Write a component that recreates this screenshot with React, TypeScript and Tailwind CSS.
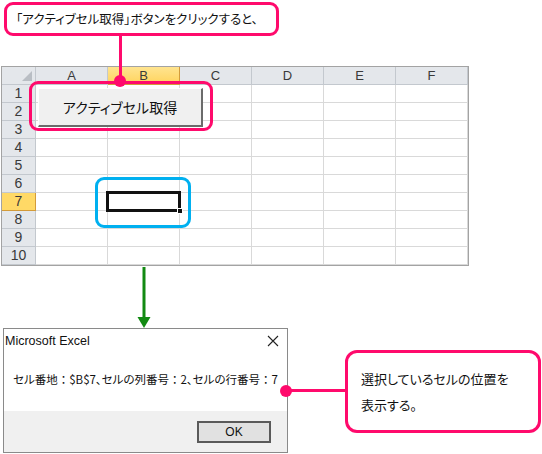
import React from 'react'

const cols = ['A', 'B', 'C', 'D', 'E', 'F']
const rows = [1, 2, 3, 4, 5, 6, 7, 8, 9, 10]

const jp = "font-['Noto_Sans_CJK_JP','Noto_Sans',sans-serif] [font-feature-settings:'palt']"

const Colon = () => <span className="[font-feature-settings:normal]">：</span>

const Sheet = () => (
  <div className="ml-[1px] w-[468px] border border-[#a3a3a3] font-['Liberation_Sans',sans-serif]">
    <div className="flex h-[18px]">
      <div className="relative w-[34px] border-r border-b border-[#c3c8ce] bg-[#e4e7eb]">
        <svg className="absolute right-[3px] bottom-[3px]" width="10" height="10" viewBox="0 0 10 10">
          <polygon points="10,0 10,10 0,10" fill="#b9bec4" />
        </svg>
      </div>
      {cols.map((c) => (
        <div
          key={c}
          className={
            c === 'B'
              ? 'flex w-[72px] items-center justify-center border-r border-b border-[#d39b3a] bg-gradient-to-b from-[#ffe48f] to-[#ffd35a] text-[13px] text-[#3a3a3a]'
              : 'flex w-[72px] items-center justify-center border-r border-b border-[#c3c8ce] bg-[#e4e7eb] text-[13px] text-[#3a3a3a]'
          }
        >
          {c}
        </div>
      ))}
    </div>
    {rows.map((r) => (
      <div key={r} className="flex h-[18px]">
        <div
          className={
            r === 7
              ? 'flex w-[34px] items-center justify-center border-r border-b border-[#d39b3a] bg-[#ffd966] text-[14px] text-[#3a3a3a]'
              : 'flex w-[34px] items-center justify-center border-r border-b border-[#c3c8ce] bg-[#e4e7eb] text-[14px] text-[#3a3a3a]'
          }
        >
          {r}
        </div>
        {cols.map((c) => (
          <div key={c} className="relative w-[72px] border-r border-b border-[#d9d9d9] bg-white">
            {r === 7 && c === 'B' && (
              <div className="absolute -top-[2px] -left-[2px] z-10 h-[21px] w-[75px] border-[3px] border-[#111]">
                <div className="absolute -right-[5px] -bottom-[5px] h-[6px] w-[6px] border border-white bg-[#111]" />
              </div>
            )}
          </div>
        ))}
      </div>
    ))}
  </div>
)

const Dialog = () => (
  <div className="mt-[62px] ml-[3px] flex h-[125px] w-[285px] flex-col border border-[#8a8a8a] bg-white">
    <div className="flex h-[24px] items-center justify-between pr-[8px] pl-[1px]">
      <span className="font-['Liberation_Sans',sans-serif] text-[12.5px] text-[#111]">Microsoft Excel</span>
      <svg width="12" height="12" viewBox="0 0 12 12">
        <path d="M1 1 L11 11 M11 1 L1 11" stroke="#222" strokeWidth="1.1" />
      </svg>
    </div>
    <div className={`flex flex-1 items-center pl-[9px] pb-[4px] text-[11.5px] text-[#111] ${jp}`}>
      <span>
        セル番地<Colon />$B$7、セルの列番号<Colon />2、セルの行番号<Colon />7
      </span>
    </div>
    <div className="flex h-[41px] items-center justify-end bg-[#f0f0f0] pr-[16px]">
      <div className="flex h-[22px] w-[74px] items-center justify-center border-2 border-[#5a5a5a] bg-[#e1e1e1] font-['Liberation_Sans',sans-serif] text-[12px] text-[#111]">
        OK
      </div>
    </div>
  </div>
)

export default function App() {
  return (
    <div className="relative h-[454px] w-[542px] overflow-hidden bg-white">
      <div className="pt-[66px]">
        <Sheet />
        <Dialog />
      </div>

      {/* Excel button overlaid on the sheet */}
      <div className={`absolute top-[88px] left-[38px] flex h-[39px] w-[165px] items-center justify-center border-t border-l border-t-white border-l-white border-r-2 border-b-2 border-r-[#6b6b6b] border-b-[#6b6b6b] bg-[#f0f0f0] text-[14px] text-[#111] ${jp}`}>
        アクティブセル取得
      </div>

      {/* top callout */}
      <div className={`absolute top-[2px] left-[4px] flex h-[34px] w-[275px] items-center rounded-[9px] border-[3px] border-[#ff0a6c] bg-white pl-[9px] text-[12.5px] text-[#111] ${jp}`}>
        「アクティブセル取得」ボタンをクリックすると、
      </div>
      <div className="absolute top-[35px] left-[119px] h-[46px] w-[3px] bg-[#ff0a6c]" />
      <div className="absolute top-[81px] left-[29px] h-[50px] w-[184px] rounded-[9px] border-[3px] border-[#ff0a6c]" />
      <div className="absolute top-[75px] left-[114px] h-[12px] w-[12px] rounded-full bg-[#ff0a6c]" />

      {/* active cell highlight */}
      <div className="absolute top-[177px] left-[95px] h-[51px] w-[96px] rounded-[9px] border-[3px] border-[#00b0f0]" />

      {/* arrow */}
      <svg className="absolute top-[267px] left-[137px]" width="14" height="62" viewBox="0 0 14 62">
        <rect x="5.5" y="0" width="3" height="52" fill="#128a12" />
        <polygon points="0.5,50 13.5,50 7,61" fill="#128a12" />
      </svg>

      {/* right callout */}
      <div className="absolute top-[389px] left-[286px] h-[3px] w-[60px] bg-[#ff0a6c]" />
      <div className="absolute top-[385px] left-[280px] h-[12px] w-[12px] rounded-full bg-[#ff0a6c]" />
      <div className={`absolute top-[350px] left-[345px] flex h-[83px] w-[196px] flex-col justify-center gap-[6px] rounded-[12px] border-[3px] border-[#ff0a6c] bg-white pl-[13px] text-[13px] leading-[20px] text-[#111] ${jp}`}>
        <span>選択しているセルの位置を</span>
        <span>表示する。</span>
      </div>
    </div>
  )
}
